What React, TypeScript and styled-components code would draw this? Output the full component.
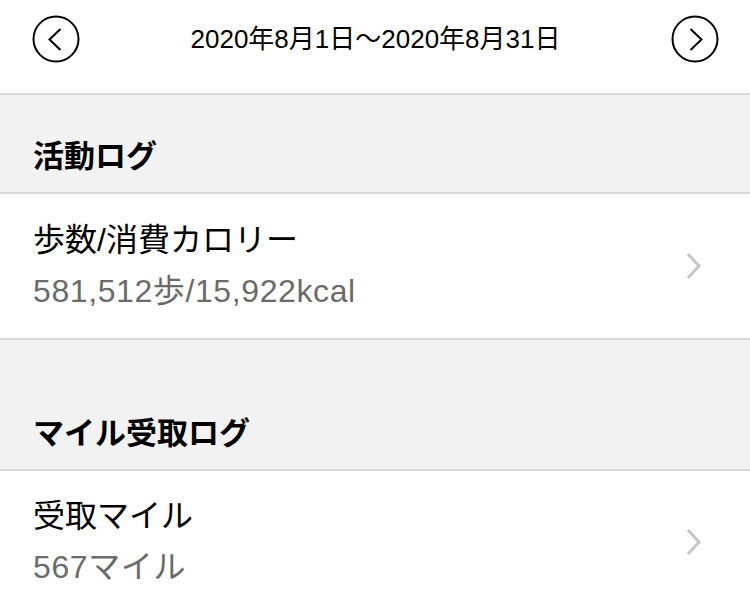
import React from "react";
import styled, { createGlobalStyle } from "styled-components";

const Global = createGlobalStyle`
  html, body { margin: 0; padding: 0; background: #ffffff; }
  body { font-family: "Liberation Sans", "Noto Sans CJK JP", sans-serif; color: #000; }
`;

const Page = styled.div`
  width: 750px;
  min-height: 615px;
  background: #f2f2f2;
`;

const TopBar = styled.div`
  height: 95px;
  box-sizing: border-box;
  background: #fff;
  border-bottom: 2px solid #d9d9d9;
  display: flex;
  align-items: flex-start;
  justify-content: space-between;
  padding: 15px 31px 0 32px;
`;

const CircleButton = styled.button`
  width: 48px;
  height: 48px;
  padding: 0;
  border: none;
  background: transparent;
  display: flex;
  align-items: center;
  justify-content: center;
`;

const DateText = styled.div`
  font-size: 26px;
  line-height: 48px;
`;

const SectionHeader = styled.div<{ $h: number }>`
  height: ${(p) => p.$h}px;
  box-sizing: border-box;
  display: flex;
  align-items: flex-end;
  padding: 0 33px 18px;
  font-family: "Noto Sans CJK JP", sans-serif;
  font-size: 31px;
  font-weight: 700;
  line-height: 40px;
  border-bottom: 2px solid #d9d9d9;
`;

const Row = styled.div<{ $top: number }>`
  background: #fff;
  display: flex;
  align-items: center;
  justify-content: space-between;
  padding: ${(p) => p.$top}px 46px 27px 33px;
  border-bottom: 2px solid #d9d9d9;
  &:last-child {
    padding-bottom: 32px;
    border-bottom: none;
  }
`;

const RowText = styled.div`
  display: flex;
  flex-direction: column;
  gap: 11px;
`;

const Title = styled.div`
  font-size: 32px;
  line-height: 40px;
`;

const Value = styled.div`
  font-size: 32px;
  line-height: 40px;
  letter-spacing: 0.6px;
  color: #6b6b6b;
`;

const Circle = ({ dir }: { dir: "left" | "right" }) => (
  <svg width="48" height="48" viewBox="0 0 48 48">
    <circle cx="24" cy="24" r="22.5" fill="none" stroke="#000" strokeWidth="2" />
    {dir === "left" ? (
      <polyline points="28.5,14 17.5,24.5 28.5,35" fill="none" stroke="#000" strokeWidth="2" />
    ) : (
      <polyline points="19.5,14 30.5,24.5 19.5,35" fill="none" stroke="#000" strokeWidth="2" />
    )}
  </svg>
);

const Chevron = () => (
  <svg width="20" height="28" viewBox="0 0 20 28">
    <polyline points="4,2 15,14 4,26" fill="none" stroke="#c7c7cc" strokeWidth="3.2" />
  </svg>
);

export default function App() {
  return (
    <>
      <Global />
      <Page>
        <TopBar>
          <CircleButton aria-label="前へ">
            <Circle dir="left" />
          </CircleButton>
          <DateText>2020年8月1日～2020年8月31日</DateText>
          <CircleButton aria-label="次へ">
            <Circle dir="right" />
          </CircleButton>
        </TopBar>
        <SectionHeader $h={99}>活動ログ</SectionHeader>
        <Row $top={26}>
          <RowText>
            <Title>歩数/消費カロリー</Title>
            <Value>581,512歩/15,922kcal</Value>
          </RowText>
          <Chevron />
        </Row>
        <SectionHeader $h={131}>マイル受取ログ</SectionHeader>
        <Row $top={25}>
          <RowText>
            <Title>受取マイル</Title>
            <Value>567マイル</Value>
          </RowText>
          <Chevron />
        </Row>
      </Page>
    </>
  );
}
